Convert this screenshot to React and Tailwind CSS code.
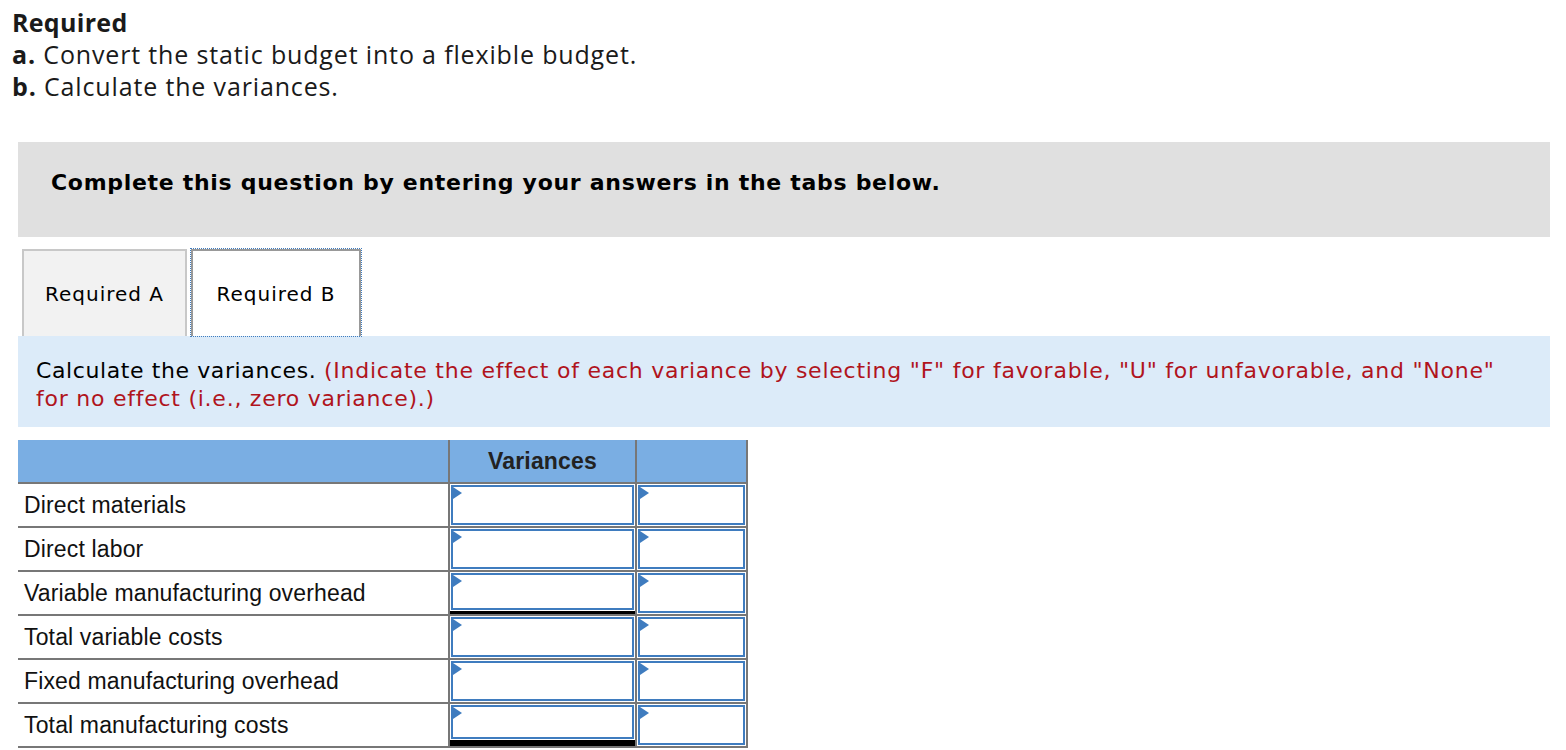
import React from "react";

const rows = [
  { label: "Direct materials" },
  { label: "Direct labor" },
  { label: "Variable manufacturing overhead", black: "single" },
  { label: "Total variable costs" },
  { label: "Fixed manufacturing overhead" },
  { label: "Total manufacturing costs", black: "double" },
];

function Box() {
  return (
    <div className="relative h-full w-full border-2 border-[#3f7cbf] bg-white">
      <div className="absolute left-0 top-0 w-0 h-0 border-t-[6px] border-b-[6px] border-l-[9px] border-t-transparent border-b-transparent border-l-[#3f7cbf]" />
    </div>
  );
}

export default function App() {
  return (
    <div className="w-[1566px] h-[750px] overflow-hidden bg-white text-black">
      <div className="pl-[12px] pt-[6px] font-['Open_Sans',sans-serif] text-[25px] leading-[32px] tracking-[0.85px] text-[#1a1a1a]">
        <div className="font-bold tracking-[0.3px]">Required</div>
        <div>
          <span className="font-bold">a.</span> Convert the static budget into a flexible budget.
        </div>
        <div>
          <span className="font-bold">b.</span> Calculate the variances.
        </div>
      </div>

      <div className="ml-[18px] mr-[16px] mt-[40px] h-[95px] bg-[#e0e0e0] flex items-center pl-[33px] pb-[14px] font-['DejaVu_Sans','Verdana',sans-serif] font-bold text-[22px] tracking-[0.7px]">
        Complete this question by entering your answers in the tabs below.
      </div>

      <div className="ml-[22px] mt-[12px] flex gap-[4px] h-[87px] font-['DejaVu_Sans','Verdana',sans-serif] text-[20px] tracking-[1px]">
        <div className="w-[165px] h-full bg-[#f2f2f2] border-2 border-b-0 border-[#c8c8c8] flex items-center justify-center">
          Required A
        </div>
        <div className="w-[170px] h-full bg-white border-2 border-b-0 border-[#999] outline outline-1 outline-dotted outline-[#3f7cbf] flex items-center justify-center">
          Required B
        </div>
      </div>

      <div className="ml-[18px] mr-[16px] h-[91px] bg-[#dcebf9] pl-[18px] pr-[30px] pt-[21px] font-['DejaVu_Sans','Verdana',sans-serif] text-[22px] leading-[28px] tracking-[0.6px]">
        <span className="text-black">Calculate the variances. </span>
        <span className="text-[#b0141d] tracking-[0.75px]">
          (Indicate the effect of each variance by selecting "F" for favorable, "U" for unfavorable, and "None" for no effect (i.e., zero variance).)
        </span>
      </div>

      <table className="ml-[18px] mt-[13px] border-collapse font-['Liberation_Sans',Arial,sans-serif] text-[23px] tracking-[0.15px] text-[#111]">
        <thead>
          <tr className="h-[43px] bg-[#7aaee3]">
            <th className="w-[431px] p-0 border-b-2 border-[#777]"></th>
            <th className="w-[187px] p-0 border-l-2 border-b-2 border-[#777] font-bold text-center text-[#222]">
              Variances
            </th>
            <th className="w-[111px] p-0 border-l-2 border-r-2 border-b-2 border-[#777]"></th>
          </tr>
        </thead>
        <tbody>
          {rows.map((r) => (
            <tr key={r.label} className="h-[44px]">
              <td className="p-0 pl-[6px] border-b-2 border-[#777] align-middle">{r.label}</td>
              <td className="p-0 border-l-2 border-b-2 border-[#777] align-top">
                <div
                  className={`h-[42px] p-[1px] ${
                    r.black === "single"
                      ? "border-b-[3px] border-black"
                      : r.black === "double"
                      ? "border-b-[6px] border-black"
                      : ""
                  }`}
                >
                  <Box />
                </div>
              </td>
              <td className="p-0 border-l-2 border-r-2 border-b-2 border-[#777] align-top">
                <div className="h-[42px] p-[1px]">
                  <Box />
                </div>
              </td>
            </tr>
          ))}
        </tbody>
      </table>
    </div>
  );
}
